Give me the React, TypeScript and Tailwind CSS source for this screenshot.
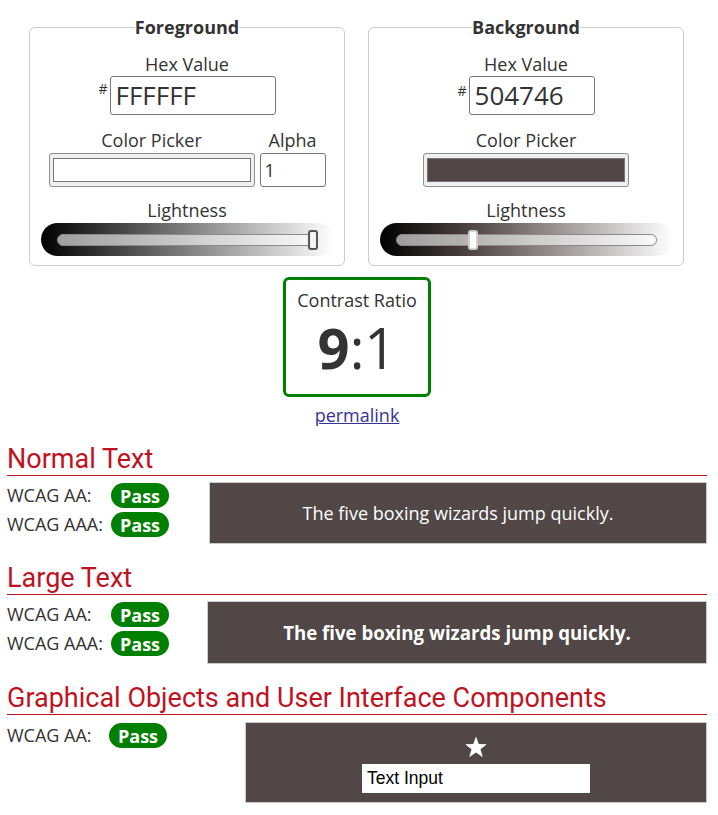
import React from "react";

function Slider({ gradient, pos, thumbClass }: { gradient: string; pos: number; thumbClass: string }) {
  return (
    <div
      className="w-[293px] h-[33px] rounded-full flex items-center px-[16px]"
      style={{ background: gradient }}
    >
      <div className="relative w-full h-[12px] rounded-full border border-[#8a8a8a] bg-white/60">
        <div
          className={"absolute top-[-5px] w-[10px] h-[20px] rounded-[3px] border-2 " + thumbClass}
          style={{ left: `calc(${pos}% - 5px)` }}
        />
      </div>
    </div>
  );
}

function ColorSwatch({ color }: { color: string }) {
  return (
    <div className="w-[206px] h-[34px] rounded-[3px] border border-[#8f8f8f] bg-[#efefef] px-[3px] py-[4px]">
      <div className="w-full h-full border border-[#767676]" style={{ backgroundColor: color }} />
    </div>
  );
}

function Pass() {
  return (
    <span className="inline-flex items-center justify-center w-[58px] h-[25px] rounded-full bg-[#008000] text-white font-bold text-[18px] leading-none">
      Pass
    </span>
  );
}

function Heading({ children }: { children: React.ReactNode }) {
  return (
    <h2 className="font-['Roboto'] text-[27px] leading-[32px] text-[#c1121f] border-b border-[#c1121f] w-[700px]">
      {children}
    </h2>
  );
}

export default function App() {
  return (
    <div className="w-[718px] min-h-[815px] bg-white text-[#333] font-['Open_Sans',sans-serif] text-[18px]">
      <div className="flex gap-[23px] pl-[29px] pt-[16px]">
        {/* Foreground */}
        <fieldset className="w-[316px] h-[250px] border border-[#cccccc] rounded-[6px]">
          <legend className="mx-auto px-0 font-bold text-[18px] leading-[23px]">Foreground</legend>
          <div className="flex flex-col items-center">
            <div className="mt-[13px] leading-[24px]">Hex Value</div>
            <div className="flex items-start">
              <span className="text-[14px] leading-none mt-[6px] mr-[2px]">#</span>
              <div className="w-[166px] h-[39px] border border-[#767676] rounded-[3px] px-[5px] flex items-center text-[26px]">
                FFFFFF
              </div>
            </div>
            <div className="flex gap-[5px] mt-[13px]">
              <div className="flex flex-col items-center">
                <div className="leading-[24px] mb-[1px]">Color Picker</div>
                <ColorSwatch color="#ffffff" />
              </div>
              <div className="flex flex-col items-center">
                <div className="leading-[24px] mb-[1px]">Alpha</div>
                <div className="w-[66px] h-[34px] border border-[#767676] rounded-[3px] px-[4px] flex items-center">1</div>
              </div>
            </div>
            <div className="leading-[24px] mt-[11px] mb-[1px]">Lightness</div>
            <Slider
              gradient="linear-gradient(to right, #000 0%, #fff 100%)"
              pos={98.5}
              thumbClass="bg-[#f2f2f2] border-[#555]"
            />
          </div>
        </fieldset>

        {/* Background */}
        <fieldset className="w-[316px] h-[250px] border border-[#cccccc] rounded-[6px]">
          <legend className="mx-auto px-0 font-bold text-[18px] leading-[23px]">Background</legend>
          <div className="flex flex-col items-center">
            <div className="mt-[13px] leading-[24px]">Hex Value</div>
            <div className="flex items-start">
              <span className="text-[14px] leading-none mt-[8px] mr-[2px]">#</span>
              <div className="w-[126px] h-[39px] border border-[#767676] rounded-[3px] px-[5px] flex items-center text-[26px]">
                504746
              </div>
            </div>
            <div className="flex flex-col items-center mt-[13px]">
              <div className="leading-[24px] mb-[1px]">Color Picker</div>
              <ColorSwatch color="#504746" />
            </div>
            <div className="leading-[24px] mt-[11px] mb-[1px]">Lightness</div>
            <Slider
              gradient="linear-gradient(to right, #000 0%, #504746 32%, #fff 100%)"
              pos={29.7}
              thumbClass="bg-white border-[#cfcfcf]"
            />
          </div>
        </fieldset>
      </div>

      {/* Contrast ratio */}
      <div className="flex flex-col items-center mt-[11px] pr-[4px]">
        <div className="w-[148px] h-[120px] border-[3px] border-[#008000] rounded-[6px] flex flex-col items-center">
          <div className="mt-[8px] leading-[24px]">Contrast Ratio</div>
          <div className="mt-[7px] text-[56px] leading-[56px]">
            <span className="font-bold">9</span>:1
          </div>
        </div>
        <a href="#" className="mt-[6px] leading-[24px] underline text-[#333399]">
          permalink
        </a>
      </div>

      {/* Normal Text */}
      <div className="px-[7px] mt-[16px]">
        <Heading>Normal Text</Heading>
        <div className="flex mt-[6px]">
          <div className="w-[202px] flex flex-col gap-[4px] pt-[1px]">
            <div className="flex items-center h-[25px]">
              <span className="w-[104px]">WCAG AA:</span>
              <Pass />
            </div>
            <div className="flex items-center h-[25px]">
              <span className="w-[104px]">WCAG AAA:</span>
              <Pass />
            </div>
          </div>
          <div className="w-[498px] h-[62px] bg-[#504746] border border-[#cccccc] flex items-center justify-center text-white">
            The five boxing wizards jump quickly.
          </div>
        </div>
      </div>

      {/* Large Text */}
      <div className="px-[7px] mt-[18px]">
        <Heading>Large Text</Heading>
        <div className="flex mt-[6px]">
          <div className="w-[200px] flex flex-col gap-[4px] pt-[1px]">
            <div className="flex items-center h-[25px]">
              <span className="w-[104px]">WCAG AA:</span>
              <Pass />
            </div>
            <div className="flex items-center h-[25px]">
              <span className="w-[104px]">WCAG AAA:</span>
              <Pass />
            </div>
          </div>
          <div className="w-[500px] h-[63px] bg-[#504746] border border-[#cccccc] flex items-center justify-center text-white font-bold text-[18.67px]">
            The five boxing wizards jump quickly.
          </div>
        </div>
      </div>

      {/* Graphical */}
      <div className="px-[7px] mt-[18px]">
        <Heading>Graphical Objects and User Interface Components</Heading>
        <div className="flex mt-[7px]">
          <div className="w-[238px] flex flex-col pt-[1px]">
            <div className="flex items-center h-[25px]">
              <span className="w-[102px]">WCAG AA:</span>
              <Pass />
            </div>
          </div>
          <div className="w-[462px] h-[81px] bg-[#504746] border border-[#cccccc] flex flex-col items-center pt-[13px]">
            <svg width="24" height="22" viewBox="0 0 24 23" className="block">
              <polygon
                points="12,0.5 14.9,8.4 23.4,8.7 16.7,13.9 19.1,22.1 12,17.3 4.9,22.1 7.3,13.9 0.6,8.7 9.1,8.4"
                fill="#ffffff"
              />
            </svg>
            <div className="mt-[6px] w-[228px] h-[29px] bg-white text-black font-['Liberation_Sans',Arial,sans-serif] text-[17.5px] px-[5px] flex items-center">
              Text Input
            </div>
          </div>
        </div>
      </div>
    </div>
  );
}
